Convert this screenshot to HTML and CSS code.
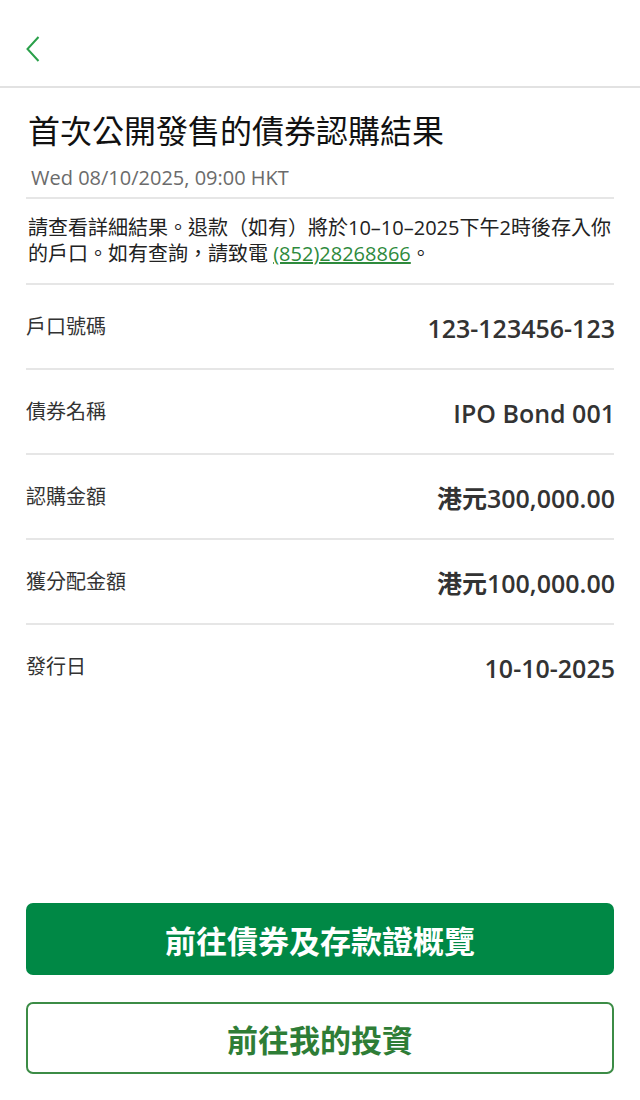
FILE: index.html
```html
<!DOCTYPE html>
<html lang="zh-Hant">
<head>
  <meta charset="utf-8">
  <title>首次公開發售的債券認購結果</title>
  <link rel="stylesheet" href="styles.css">
</head>
<body>
  <div class="app">
    <header class="topbar">
      <a class="back" href="#" aria-label="返回">
        <svg width="14" height="26" viewBox="0 0 14 26">
          <path d="M12.5 1 L1.5 13 L12.5 25" fill="none" stroke="#2aa04a" stroke-width="2"/>
        </svg>
      </a>
    </header>

    <main class="content">
      <h1 class="title">首次公開發售的債券認購結果</h1>
      <div class="stamp">Wed 08/10/2025, 09:00 HKT</div>

      <p class="notice">請查看詳細結果。退款（如有）將於10–10–2025下午2時後存入你的戶口。如有查詢，請致電 <a href="#" class="phone">(852)28268866</a>。</p>

      <dl class="details">
        <div class="row">
          <dt>戶口號碼</dt>
          <dd>123-123456-123</dd>
        </div>
        <div class="row">
          <dt>債券名稱</dt>
          <dd>IPO Bond 001</dd>
        </div>
        <div class="row">
          <dt>認購金額</dt>
          <dd>港元300,000.00</dd>
        </div>
        <div class="row">
          <dt>獲分配金額</dt>
          <dd>港元100,000.00</dd>
        </div>
        <div class="row">
          <dt>發行日</dt>
          <dd>10-10-2025</dd>
        </div>
      </dl>
    </main>

    <footer class="actions">
      <button class="btn btn-primary">前往債券及存款證概覽</button>
      <button class="btn btn-outline">前往我的投資</button>
    </footer>
  </div>
</body>
</html>
```

FILE: styles.css
```css
* {
  box-sizing: border-box;
}

body {
  margin: 0;
  padding: 0;
  background: #fff;
  color: #222;
  font-family: "Open Sans", "Noto Sans CJK TC", sans-serif;
}

.app {
  display: flex;
  flex-direction: column;
  min-height: 1100px;
}

.topbar {
  height: 88px;
  border-bottom: 2px solid #e2e2e2;
  display: flex;
  align-items: center;
  padding: 0 26px;
}

.back {
  display: flex;
  margin-top: 12px;
}

.content {
  flex: 1;
  padding: 0 26px;
}

.title {
  margin: 21px 0 0;
  padding-left: 2px;
  font-size: 32px;
  font-weight: 400;
  line-height: 44px;
  color: #111;
}

.stamp {
  margin-top: 12px;
  padding: 0 0 6px 5px;
  font-size: 20px;
  line-height: 26px;
  color: #6b6b6b;
  border-bottom: 2px solid #e6e6e6;
}

.notice {
  margin: 0;
  padding: 16px 2px 16px;
  font-size: 20px;
  line-height: 26px;
  color: #222;
  border-bottom: 2px solid #e6e6e6;
}

.phone {
  color: #2e8a3c;
  text-decoration: underline;
}

.details {
  margin: 0;
}

.row {
  display: flex;
  justify-content: space-between;
  align-items: flex-start;
  height: 85px;
  padding-top: 26px;
  border-bottom: 2px solid #e6e6e6;
}

.row:last-child {
  border-bottom: none;
}

.row dt {
  padding-top: 2px;
  font-size: 20px;
  line-height: 28px;
  color: #333;
}

.row dd {
  margin: 0 -1px 0 0;
  padding-top: 1px;
  font-size: 25px;
  line-height: 32px;
  font-weight: 600;
  color: #333;
}

.actions {
  display: flex;
  flex-direction: column;
  gap: 27px;
  padding: 0 26px 26px;
}

.btn {
  height: 72px;
  border-radius: 7px;
  font-family: "Open Sans", "Noto Sans CJK TC", sans-serif;
  font-size: 31px;
  font-weight: 700;
  cursor: pointer;
}

.btn-primary {
  background: #008845;
  border: none;
  color: #fff;
}

.btn-outline {
  background: #fff;
  border: 2px solid #3c8c46;
  color: #2e7d36;
}
```
